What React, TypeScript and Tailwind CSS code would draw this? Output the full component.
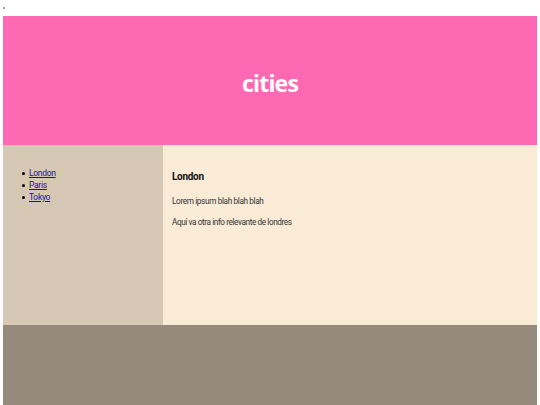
export default function App() {
  const cities = ['London', 'Paris', 'Tokyo'];

  return (
    <div className="w-[540px] h-[405px] overflow-hidden bg-white px-[3px] font-['Roboto',sans-serif]">
      <div className="h-[16px] pt-[7px]">
        <div className="w-[2px] h-[2px] bg-gray-400" />
      </div>

      <header className="h-[129px] bg-[#ff69b4] flex items-center justify-center pt-[6px]">
        <h1 className="text-white text-[23px] font-bold tracking-[-0.8px] font-['Open_Sans',sans-serif]">
          cities
        </h1>
      </header>

      <div className="flex h-[180px]">
        <nav className="w-[160px] bg-[#d6c8b4] pt-[22px] pl-[19px]">
          <ul className="text-[8.5px] leading-[12px] tracking-[-0.3px]">
            {cities.map((c) => (
              <li key={c} className="flex items-center gap-[4px]">
                <span className="w-[3px] h-[3px] rounded-full bg-black" />
                <a href="#" className="text-[#1a0dab] underline">
                  {c}
                </a>
              </li>
            ))}
          </ul>
        </nav>
        <main className="flex-1 bg-[#faebd7] pl-[9px] pt-[25px] text-[#333]">
          <h2 className="text-[10px] font-bold leading-[14px] tracking-[-0.3px] text-[#111]">London</h2>
          <p className="mt-[11px] text-[8.2px] leading-[12px] tracking-[-0.35px]">
            Lorem ipsum blah blah blah
          </p>
          <p className="mt-[9px] text-[8.2px] leading-[12px] tracking-[-0.4px]">
            Aquí va otra info relevante de londres
          </p>
        </main>
      </div>

      <footer className="h-[80px] bg-[#968a7b]" />
    </div>
  );
}
